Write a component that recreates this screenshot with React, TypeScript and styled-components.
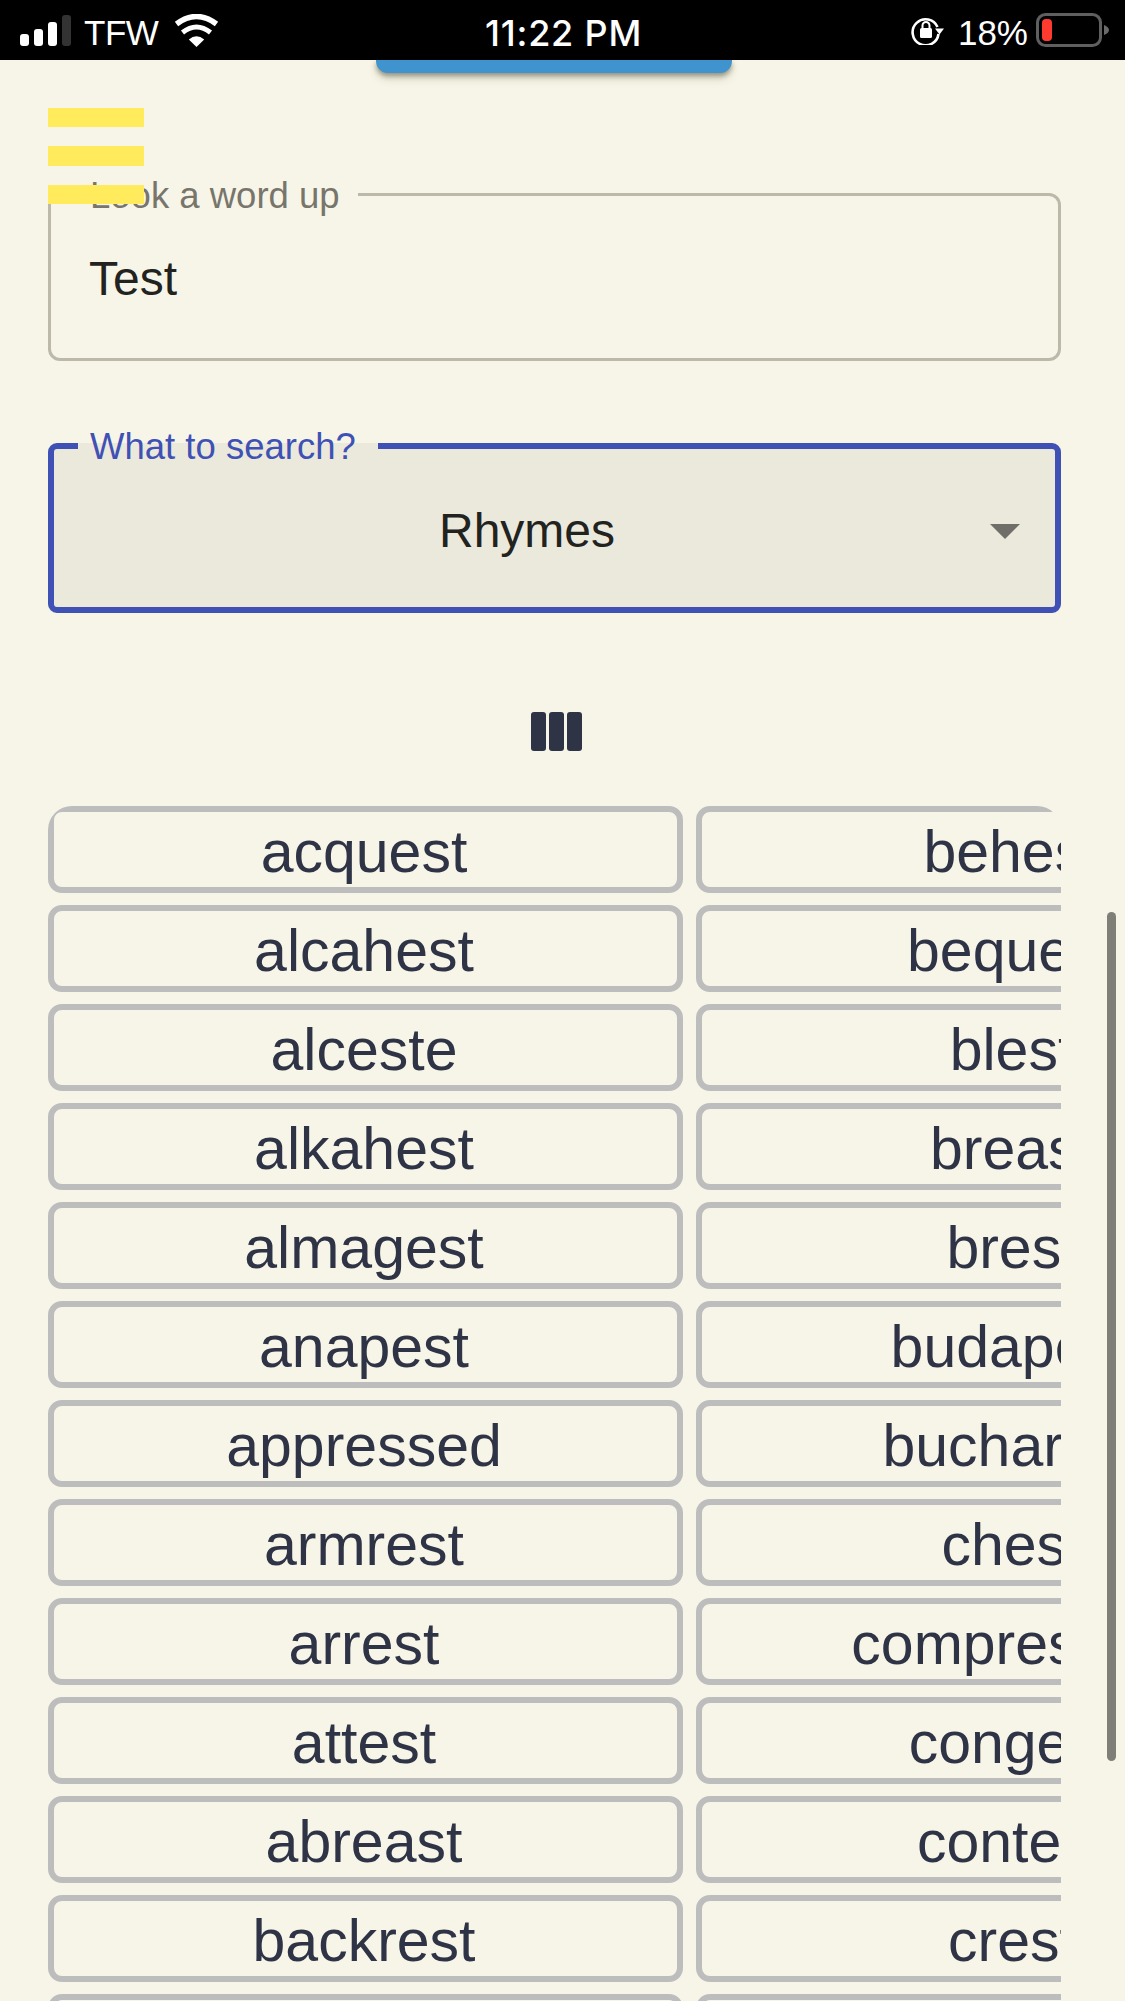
import React from "react";
import styled, { createGlobalStyle } from "styled-components";

const Global = createGlobalStyle`
  html, body { margin: 0; padding: 0; background: #f7f5e7; }
  * { box-sizing: border-box; }
  body { font-family: "Liberation Sans", Arial, sans-serif; }
`;

const Page = styled.div`
  position: relative;
  width: 1125px;
  height: 2001px;
  overflow: hidden;
  background: #f7f5e7;
`;

const StatusBar = styled.header`
  display: grid;
  grid-template-columns: 1fr auto 1fr;
  align-items: center;
  height: 60px;
  padding: 0 16px 0 20px;
  background: #000;
  color: #fff;
  font-size: 35px;
  line-height: 54px;
`;

const StatusLeft = styled.div`
  display: flex;
  align-items: center;
`;

const StatusRight = styled.div`
  display: flex;
  align-items: center;
  justify-content: flex-end;
`;

const Carrier = styled.span`
  margin: 0 16px 0 13px;
  padding-top: 6px;
  letter-spacing: -0.5px;
`;

const Clock = styled.span`
  padding-top: 5px;
  font-family: "Inter", "Liberation Sans", sans-serif;
  font-weight: 500;
  font-size: 36px;
  letter-spacing: 0.8px;
  margin-left: -2px;
`;

const Percent = styled.span`
  margin: 0 8px 0 14px;
  padding-top: 6px;
`;

const Main = styled.main`
  position: relative;
  display: flex;
  flex-direction: column;
  width: 1125px;
  padding: 113px 64px 0 48px;
`;

const TopTab = styled.div`
  position: absolute;
  top: 0;
  left: 376px;
  width: 356px;
  height: 13px;
  background: #3f93cf;
  border-radius: 0 0 12px 12px;
  box-shadow: 0 3px 5px rgba(60, 55, 30, 0.45), 0 6px 10px rgba(60, 55, 30, 0.14);
`;

const Burger = styled.div`
  position: absolute;
  z-index: 2;
  top: 48px;
  left: 48px;
  display: grid;
  grid-template-rows: repeat(3, 1fr);
  row-gap: 19px;
  width: 96px;
  height: 96px;
`;

const BurgerBar = styled.span`
  background: #ffeb5b;
`;

const Field = styled.fieldset<{ $focused?: boolean }>`
  position: relative;
  display: block;
  min-width: 0;
  width: 1013px;
  height: ${(p) => (p.$focused ? 189 : 188)}px;
  margin: ${(p) => (p.$focused ? "63px 0 0" : "0")};
  padding: 0;
  border: ${(p) => (p.$focused ? "6px solid #3f51b5" : "3px solid #bdb9aa")};
  border-radius: ${(p) => (p.$focused ? 9 : 12)}px;
  background: ${(p) => (p.$focused ? "#ebe9dc" : "transparent")};
`;

const FieldLabel = styled.legend<{ $focused?: boolean }>`
  margin-left: ${(p) => (p.$focused ? 24 : 27)}px;
  padding: ${(p) => (p.$focused ? "2px 22px 0 12px" : "2px 18px 0 12px")};
  font-size: 36.5px;
  line-height: ${(p) => (p.$focused ? 42 : 41)}px;
  color: ${(p) => (p.$focused ? "#3f51b5" : "#77756c")};
`;

const TextValue = styled.input`
  display: block;
  width: 100%;
  margin-top: 35px;
  padding: 0 0 0 38px;
  border: 0;
  outline: 0;
  background: transparent;
  font: 48px/56px "Liberation Sans", Arial, sans-serif;
  color: #22221f;
`;

const SelectValue = styled.div`
  margin-top: 35px;
  padding-right: 55px;
  text-align: center;
  font-size: 48px;
  line-height: 56px;
  color: #22221f;
`;

const SelectCaret = styled.span`
  position: absolute;
  top: 56px;
  right: 35px;
  width: 0;
  height: 0;
  border-left: 15px solid transparent;
  border-right: 15px solid transparent;
  border-top: 15px solid #6f6e68;
`;

const Toolbar = styled.div`
  display: flex;
  justify-content: center;
  margin-top: 99px;
  padding-left: 4px;
`;

const ResultsClip = styled.section`
  width: 1013px;
  height: 1300px;
  margin-top: 55px;
  overflow: hidden;
  border-radius: 24px 24px 0 0;
`;

const ResultsGrid = styled.ul`
  display: grid;
  grid-template-columns: 635px 635px;
  grid-auto-rows: 87px;
  column-gap: 13px;
  row-gap: 12px;
  margin: 0;
  padding: 0;
  list-style: none;
`;

const WordButton = styled.li`
  display: flex;
  align-items: center;
  justify-content: center;
  padding: 5px 3px 0 0;
  border: 6px solid #bdbdbd;
  border-radius: 14px;
  font-size: 59px;
  line-height: 68px;
  white-space: nowrap;
  color: #2e3346;
`;

const ScrollThumb = styled.div`
  position: absolute;
  top: 912px;
  left: 1107px;
  width: 9px;
  height: 849px;
  border-radius: 5px;
  background: #7f7f77;
`;

const pairs: [string, string][] = [
  ["acquest", "behest"],
  ["alcahest", "bequest"],
  ["alceste", "blest"],
  ["alkahest", "breast"],
  ["almagest", "brest"],
  ["anapest", "budapest"],
  ["appressed", "bucharest"],
  ["armrest", "chest"],
  ["arrest", "compressed"],
  ["attest", "congest"],
  ["abreast", "contest"],
  ["backrest", "crest"],
  ["bedrest", "digest"],
];

const SignalIcon = () => (
  <svg width="51" height="31" viewBox="0 0 51 31" aria-hidden="true">
    <rect x="0" y="19" width="9" height="12" rx="3" fill="#fff" />
    <rect x="14" y="14" width="9" height="17" rx="3" fill="#fff" />
    <rect x="28" y="7" width="9" height="24" rx="3" fill="#fff" />
    <rect x="42" y="0" width="9" height="31" rx="3" fill="#333" />
  </svg>
);

const WifiIcon = () => (
  <svg width="45" height="33" viewBox="0 0 45 33" aria-hidden="true">
    <path d="M22.5 33 L14.8 25.5 Q22.5 19 30.2 25.5 Z" fill="#fff" />
    <path d="M8.5 18.5 Q22.5 7.5 36.5 18.5" fill="none" stroke="#fff" strokeWidth="5" />
    <path d="M2.5 10 Q22.5 -5 42.5 10" fill="none" stroke="#fff" strokeWidth="5.5" />
  </svg>
);

const RotationLockIcon = () => (
  <svg width="33" height="30" viewBox="0 0 33 30" aria-hidden="true">
    <path d="M26.5 12 A13 13 0 1 0 27.5 19" fill="none" stroke="#fff" strokeWidth="2.6" />
    <path d="M24 13.5 H33 L28.5 19.5 Z" fill="#fff" />
    <rect x="9" y="13" width="12" height="10" rx="1.5" fill="#fff" />
    <path d="M11.5 13 V10.5 a3.5 3.5 0 0 1 7 0 V13" fill="none" stroke="#fff" strokeWidth="2" />
  </svg>
);

const BatteryIcon = () => (
  <svg width="73" height="34" viewBox="0 0 73 34" aria-hidden="true">
    <rect x="1.5" y="1.5" width="63" height="31" rx="8" fill="none" stroke="#5f5f5f" strokeWidth="3" />
    <rect x="6" y="6" width="10" height="22" rx="4" fill="#ff3b30" />
    <path d="M68 12 C71 13 73 15 73 17 C73 19 71 21 68 22 Z" fill="#6a6a6a" />
  </svg>
);

const ColumnsIcon = () => (
  <svg width="51" height="39" viewBox="0 0 51 39" aria-hidden="true">
    <rect x="0" y="0" width="15" height="39" rx="3" fill="#2e3346" />
    <rect x="18" y="0" width="15" height="39" rx="3" fill="#2e3346" />
    <rect x="36" y="0" width="15" height="39" rx="3" fill="#2e3346" />
  </svg>
);

export default function App() {
  return (
    <Page>
      <Global />
      <StatusBar>
        <StatusLeft>
          <SignalIcon />
          <Carrier>TFW</Carrier>
          <WifiIcon />
        </StatusLeft>
        <Clock>11:22 PM</Clock>
        <StatusRight>
          <RotationLockIcon />
          <Percent>18%</Percent>
          <BatteryIcon />
        </StatusRight>
      </StatusBar>
      <Main>
        <TopTab />
        <Burger>
          <BurgerBar />
          <BurgerBar />
          <BurgerBar />
        </Burger>
        <Field>
          <FieldLabel>Look a word up</FieldLabel>
          <TextValue defaultValue="Test" aria-label="Look a word up" />
        </Field>
        <Field $focused>
          <FieldLabel $focused>What to search?</FieldLabel>
          <SelectValue>Rhymes</SelectValue>
          <SelectCaret />
        </Field>
        <Toolbar>
          <ColumnsIcon />
        </Toolbar>
        <ResultsClip>
          <ResultsGrid>
            {pairs.flatMap(([a, b]) => [
              <WordButton key={a}>{a}</WordButton>,
              <WordButton key={b}>{b}</WordButton>,
            ])}
          </ResultsGrid>
        </ResultsClip>
      </Main>
      <ScrollThumb />
    </Page>
  );
}
